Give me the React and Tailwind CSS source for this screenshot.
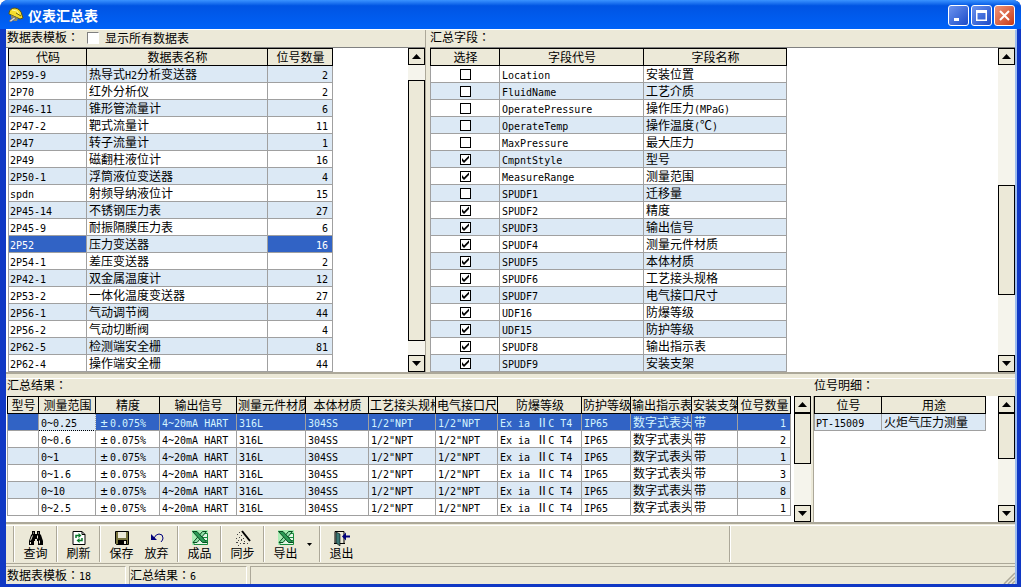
import React, { useState } from 'react';
import clsx from 'clsx';

const templates = [
  ['2P59-9', '热导式H2分析变送器', 2],
  ['2P70', '红外分析仪', 2],
  ['2P46-11', '锥形管流量计', 6],
  ['2P47-2', '靶式流量计', 11],
  ['2P47', '转子流量计', 1],
  ['2P49', '磁翻柱液位计', 16],
  ['2P50-1', '浮筒液位变送器', 4],
  ['spdn', '射频导纳液位计', 15],
  ['2P45-14', '不锈钢压力表', 27],
  ['2P45-9', '耐振隔膜压力表', 6],
  ['2P52', '压力变送器', 16],
  ['2P54-1', '差压变送器', 2],
  ['2P42-1', '双金属温度计', 12],
  ['2P53-2', '一体化温度变送器', 27],
  ['2P56-1', '气动调节阀', 44],
  ['2P56-2', '气动切断阀', 4],
  ['2P62-5', '检测端安全栅', 81],
  ['2P62-4', '操作端安全栅', 44],
];

const initialFields = [
  { code: 'Location', name: '安装位置', checked: false },
  { code: 'FluidName', name: '工艺介质', checked: false },
  { code: 'OperatePressure', name: '操作压力(MPaG)', checked: false },
  { code: 'OperateTemp', name: '操作温度(℃)', checked: false },
  { code: 'MaxPressure', name: '最大压力', checked: false },
  { code: 'CmpntStyle', name: '型号', checked: true },
  { code: 'MeasureRange', name: '测量范围', checked: true },
  { code: 'SPUDF1', name: '迁移量', checked: false },
  { code: 'SPUDF2', name: '精度', checked: true },
  { code: 'SPUDF3', name: '输出信号', checked: true },
  { code: 'SPUDF4', name: '测量元件材质', checked: true },
  { code: 'SPUDF5', name: '本体材质', checked: true },
  { code: 'SPUDF6', name: '工艺接头规格', checked: true },
  { code: 'SPUDF7', name: '电气接口尺寸', checked: true },
  { code: 'UDF16', name: '防爆等级', checked: true },
  { code: 'UDF15', name: '防护等级', checked: true },
  { code: 'SPUDF8', name: '输出指示表', checked: true },
  { code: 'SPUDF9', name: '安装支架', checked: true },
];

const resultColumns = [
  ['型号', 32],
  ['测量范围', 57],
  ['精度', 64],
  ['输出信号', 77],
  ['测量元件材质', 69],
  ['本体材质', 63],
  ['工艺接头规格', 67],
  ['电气接口尺寸', 62],
  ['防爆等级', 84],
  ['防护等级', 49],
  ['输出指示表', 61],
  ['安装支架', 46],
  ['位号数量', 53],
];

const results = [
  ['0~0.25', 1],
  ['0~0.6', 2],
  ['0~1', 1],
  ['0~1.6', 3],
  ['0~10', 8],
  ['0~2.5', 1],
].map(([range, count]) => [
  '', range, '±0.075%', '4~20mA HART', '316L', '304SS', '1/2"NPT', '1/2"NPT',
  'Ex ia ⅡC T4', 'IP65', '数字式表头', '带', count,
]);

function runClass(part) {
  // the TC face centres the colon in its cell
  if (part === '：') return "font-['Noto_Sans_CJK_TC',sans-serif] leading-none";
  if (part === '±') return "inline-block w-3 text-center font-['DejaVu_Sans_Mono',monospace] text-xs leading-none";
  return "font-['DejaVu_Sans_Mono','Liberation_Mono',monospace] text-[10px] leading-none";
}

// Latin runs get a half-width face so that two letters fill one Chinese cell
function Txt({ children }) {
  const parts = String(children).split(/([\x20-\x7e]+|±|：)/);
  return parts.map((part, i) =>
    i % 2 ? (
      <span key={i} className={runClass(part)}>
        {part}
      </span>
    ) : (
      part
    )
  );
}

function Grid({ columns, children }) {
  const total = columns.reduce((sum, c) => sum + c[1], 0);
  return (
    <table className="table-fixed border-separate border-spacing-0 shrink-0 self-start" style={{ width: total }}>
      <colgroup>
        {columns.map(([label, width]) => (
          <col key={label} style={{ width }} />
        ))}
      </colgroup>
      <thead>
        <tr>
          {columns.map(([label]) => (
            <th
              key={label}
              className="h-[18px] overflow-hidden whitespace-nowrap border-y border-r border-black bg-[#ece9d8] p-0 pl-px text-center font-normal leading-4 first:border-l"
            >
              {label}
            </th>
          ))}
        </tr>
      </thead>
      <tbody>{children}</tbody>
    </table>
  );
}

function Cell({ className, children }) {
  return (
    <td
      className={clsx(
        'h-[17px] overflow-hidden whitespace-nowrap border-b border-r border-[#a0a0a0] p-0 pl-0.5 leading-4 first:border-l first:pl-px',
        className
      )}
    >
      {children}
    </td>
  );
}

function Arrow({ up }) {
  return (
    <svg width="9" height="5" viewBox="0 0 9 5">
      <path d={up ? 'M0 5L4.5 0L9 5Z' : 'M0 0L4.5 5L9 0Z'} fill="#000" />
    </svg>
  );
}

function ScrollBar({ before, thumb, after }) {
  const button = 'flex h-[17px] shrink-0 items-center justify-center border border-black bg-[#ece9d8]';
  return (
    <div className="flex w-[17px] shrink-0 flex-col bg-[#f5f4ec]">
      <button type="button" aria-label="向上滚动" className={button}>
        <Arrow up />
      </button>
      <div style={{ flexGrow: before }} />
      <div className="border border-black bg-[#ece9d8]" style={{ flexGrow: thumb }} />
      <div style={{ flexGrow: after }} />
      <button type="button" aria-label="向下滚动" className={button}>
        <Arrow />
      </button>
    </div>
  );
}

function CheckBox({ checked, onChange, label }) {
  return (
    <span className="relative mx-auto block size-[11px]">
      <input
        type="checkbox"
        aria-label={label}
        checked={checked}
        onChange={onChange}
        className="block size-[11px] appearance-none border border-black bg-white"
      />
      {checked && (
        <svg className="pointer-events-none absolute inset-0" width="11" height="11" viewBox="0 0 11 11">
          <path d="M2 4v3l2 2 5-5V1.500L4 6.500Z" fill="#000" />
        </svg>
      )}
    </span>
  );
}

function HelmetIcon() {
  return (
    <svg width="16" height="16" viewBox="0 0 16 16">
      <path d="M1 6Q2 1 7 1Q13 2 14 8L15 11L12 12L1 7Z" fill="#f4dc2c" stroke="#5c5410" />
      <path d="M4 3l5 1 2 4" fill="none" stroke="#fff9a0" />
      <path d="M3 8l7 3-1 3H6L3 11Z" fill="#8d8a68" />
      <path d="M1 14l5-4 2 1-5 4Z" fill="#d8d8d8" stroke="#555" strokeWidth=".6" />
      <path d="M8 6l5 3" stroke="#6b6410" />
    </svg>
  );
}

function FindIcon() {
  return (
    <svg width="16" height="16" viewBox="0 0 16 16">
      <path
        d="M4 1h3v3h2V1h3v3l1 1 2 6v4h-5v-4H9V9H7v2H6v4H1v-4l2-6 1-1Z"
        fill="#000"
      />
      <path d="M4.500 5.500L2.500 10.500M9.500 5.500v3M5.500 2.500v1M10.500 2.500v1M11.500 10.500v3M2.500 12v2" stroke="#ece9d8" />
    </svg>
  );
}

function RefreshIcon() {
  return (
    <svg width="16" height="16" viewBox="0 0 16 16">
      <path d="M2 1.500h9l3 3v10H2Z" fill="#fff" stroke="#000" />
      <path d="M11 1.500v3h3" fill="none" stroke="#000" />
      <path d="M5 8V5.500h3M11 8v2.500H8" fill="none" stroke="#087a28" strokeWidth="1.500" />
      <path d="M7.500 3l3 2.500-3 2.500ZM8.500 8l-3 2.500 3 2.500Z" fill="#087a28" />
    </svg>
  );
}

function SaveIcon() {
  return (
    <svg width="16" height="16" viewBox="0 0 16 16">
      <path d="M1.500 1.500h13v13h-12l-1-1Z" fill="#77733c" stroke="#000" />
      <path d="M4 2h8v6H4Z" fill="#ece9d8" />
      <path d="M4 10h9v4H4Z" fill="#000" />
      <path d="M10 11h2v3h-2Z" fill="#ece9d8" />
    </svg>
  );
}

function UndoIcon() {
  return (
    <svg width="16" height="16" viewBox="0 0 16 16">
      <path d="M2 4v6h6Z" fill="#00007b" />
      <path d="M5 8q2-4 5-4q4 0 4 4q0 2-2 4" fill="none" stroke="#00007b" />
    </svg>
  );
}

function ExcelIcon() {
  return (
    <svg width="18" height="16" viewBox="0 0 18 16">
      <path d="M1 0h16v15H1Z" fill="#a9edb4" />
      <path d="M10 3.500h6.500v11H3V12" fill="#e2f7e5" stroke="#168a3c" />
      <path d="M12 7.500h4M12 10.500h4" stroke="#168a3c" />
      <path d="M15.500 1.500h-4L2 12.500h4Z" fill="#8fe0a6" stroke="#064d20" />
      <path d="M1.500 1.500h4.500l10 11h-4.500Z" fill="#2a9a55" stroke="#064d20" />
    </svg>
  );
}

function WandIcon() {
  return (
    <svg width="16" height="16" viewBox="0 0 16 16">
      <path d="M7 1l8 10" stroke="#000" strokeWidth="2" />
      <path
        d="M4 2h1v1H4zM2 4h1v1H2zM6 5h1v1H6zM4 7h1v1H4zM1 8h1v1H1zM8 8h1v1H8zM6 9h1v2H6zM3 10h1v1H3zM1 12h2v1H1zM9 11h1v1H9zM5 13h1v1H5zM8 13h2v1H8zM12 13h1v1h-1zM3 15h1v1H3z"
        fill="#444"
      />
    </svg>
  );
}

function ExitIcon() {
  return (
    <svg width="16" height="16" viewBox="0 0 16 16">
      <path d="M1 13.500V1.500h9v12M0 13.500h11" fill="none" stroke="#000" />
      <path d="M2 2l4 2v12l-4-3Z" fill="#3b7774" stroke="#000" strokeWidth=".6" />
      <path d="M8 6.500l4-4v3h4v2h-4v3Z" fill="#00007b" />
    </svg>
  );
}

function ToolButton({ label, icon }) {
  return (
    <button type="button" className="flex w-[35px] flex-col items-center pt-1 leading-4">
      {icon}
      <span className="leading-[14px]">{label}</span>
    </button>
  );
}

function Separator() {
  return <div className="mx-[3px] w-0.5 border-l border-r border-l-[#aca899] border-r-white" />;
}

function TitleButton({ label, close, children }) {
  return (
    <button
      type="button"
      aria-label={label}
      className={clsx(
        'flex size-[21px] items-center justify-center rounded-[3px] border border-white bg-linear-to-br',
        close ? 'from-[#ee9478] to-[#c5360f]' : 'from-[#6d93ee] to-[#1c49c8]'
      )}
    >
      <svg width="13" height="13" viewBox="0 0 13 13">
        {children}
      </svg>
    </button>
  );
}

function App() {
  const [showAll, setShowAll] = useState(false);
  const [selected, setSelected] = useState(10);
  const [fields, setFields] = useState(initialFields);

  const toggleField = (index) => {
    setFields(fields.map((f, i) => (i === index ? { ...f, checked: !f.checked } : f)));
  };

  return (
    <div className="flex min-h-screen flex-col overflow-hidden rounded-t-lg bg-[#1038c4] font-['Noto_Sans_CJK_SC',sans-serif] text-xs text-black">
      <header className="flex h-[29px] shrink-0 items-center bg-linear-to-b from-[#3a93ff] via-[#0054e3] via-20% to-[#0062f8] pl-2 pr-[6px]">
        <HelmetIcon />
        <h1 className="ml-1 flex-1 text-sm font-bold text-white">仪表汇总表</h1>
        <div className="flex gap-0.5 pt-0.5">
          <TitleButton label="最小化">
            <path d="M2 9h5v3H2Z" fill="#fff" />
          </TitleButton>
          <TitleButton label="最大化">
            <path d="M1 1h11v11H1ZM2.500 4v6.500h8V4Z" fill="#fff" fillRule="evenodd" />
          </TitleButton>
          <TitleButton label="关闭" close>
            <path d="M2 2l9 9M11 2l-9 9" stroke="#fff" strokeWidth="2" />
          </TitleButton>
        </div>
      </header>

      <main className="ml-[6px] mr-1 mb-[3px] flex flex-1 flex-col border-r-2 border-t border-r-[#9cbcf0] border-t-white bg-[#ece9d8]">
        <div className="grid grid-cols-[419fr_5px_585fr]">
          <section>
            <div className="flex h-[17px] items-start pl-px">
              <h2 className="leading-[14px]">
                <Txt>数据表模板：</Txt>
              </h2>
              <label className="ml-2 flex items-center gap-[6px] leading-4">
                <input
                  type="checkbox"
                  checked={showAll}
                  onChange={() => setShowAll(!showAll)}
                  className="size-3 appearance-none border border-[#808080] border-b-white border-r-white bg-white checked:bg-[#3163c5]"
                />
                显示所有数据表
              </label>
            </div>
            <div className="flex justify-between border-t border-[#808080] bg-white pl-0.5">
              <Grid columns={[['代码', 79], ['数据表名称', 181], ['位号数量', 65]]}>
                {templates.map(([code, name, count], i) => {
                  const active = i === selected;
                  return (
                    <tr
                      key={code}
                      onClick={() => setSelected(i)}
                      className={i % 2 === 0 ? 'bg-[#dce9f5]' : 'bg-white'}
                    >
                      <Cell className={clsx(active && 'bg-[#3163c5] text-white')}>
                        <Txt>{code}</Txt>
                      </Cell>
                      <Cell>
                        <Txt>{name}</Txt>
                      </Cell>
                      <Cell className={clsx('pr-1 text-right', active && 'bg-[#3163c5] text-white')}>
                        <Txt>{count}</Txt>
                      </Cell>
                    </tr>
                  );
                })}
              </Grid>
              <ScrollBar before={15} thumb={261} after={14} />
            </div>
          </section>

          <div className="border-l border-[#aca899]" />

          <section>
            <h2 className="h-[17px] leading-[14px]">
              <Txt>汇总字段：</Txt>
            </h2>
            <div className="flex justify-between border-t border-[#808080] bg-white">
              <Grid columns={[['选择', 70], ['字段代号', 144], ['字段名称', 143]]}>
                {fields.map((field, i) => (
                  <tr key={field.code} className={i % 2 ? 'bg-[#dce9f5]' : 'bg-white'}>
                    <Cell>
                      <CheckBox
                        label={field.name}
                        checked={field.checked}
                        onChange={() => toggleField(i)}
                      />
                    </Cell>
                    <Cell>
                      <Txt>{field.code}</Txt>
                    </Cell>
                    <Cell>
                      <Txt>{field.name}</Txt>
                    </Cell>
                  </tr>
                ))}
              </Grid>
              <ScrollBar before={121} thumb={109} after={60} />
            </div>
          </section>
        </div>

        <div className="h-[6px] border-t-2 border-[#aca899]" />

        <div className="grid grid-cols-[805fr_3px_201fr] border-t border-white">
          <section>
            <h2 className="h-[17px] pl-px leading-3">
              <Txt>汇总结果：</Txt>
            </h2>
            <div className="flex h-[126px] justify-between bg-white pl-px">
              <Grid columns={resultColumns}>
                {results.map((row, r) => (
                  <tr
                    key={row[1]}
                    className={clsx(r === 0 ? 'bg-[#3163c5] text-[#d4f4ff]' : r % 2 === 0 ? 'bg-[#dce9f5]' : 'bg-white')}
                  >
                    {row.map((value, c) => (
                      <Cell
                        key={c}
                        className={clsx(
                          c === row.length - 1 && 'pr-1 text-right',
                          r === 0 && c === 1 && 'border-dotted border-b-black bg-[#dce9f5] text-black'
                        )}
                      >
                        <Txt>{value}</Txt>
                      </Cell>
                    ))}
                  </tr>
                ))}
              </Grid>
              <ScrollBar before={0} thumb={50} after={42} />
            </div>
          </section>

          <div className="mt-[17px] border-r border-[#aca899]" />

          <section>
            <h2 className="h-[17px] leading-3">
              <Txt>位号明细：</Txt>
            </h2>
            <div className="flex h-[126px] justify-between bg-white">
              <Grid columns={[['位号', 68], ['用途', 104]]}>
                <tr className="bg-[#dce9f5]">
                  <Cell>
                    <Txt>PT-15009</Txt>
                  </Cell>
                  <Cell>火炬气压力测量</Cell>
                </tr>
              </Grid>
              <ScrollBar before={0} thumb={45} after={47} />
            </div>
          </section>
        </div>

        <div className="h-1 border-b border-t-2 border-b-white border-t-[#aca899]" />

        <div className="flex h-[38px] border-b border-[#aca899] pb-px pl-1">
          <Separator />
          <ToolButton label="查询" icon={<FindIcon />} />
          <Separator />
          <ToolButton label="刷新" icon={<RefreshIcon />} />
          <Separator />
          <ToolButton label="保存" icon={<SaveIcon />} />
          <ToolButton label="放弃" icon={<UndoIcon />} />
          <Separator />
          <ToolButton label="成品" icon={<ExcelIcon />} />
          <Separator />
          <ToolButton label="同步" icon={<WandIcon />} />
          <Separator />
          <ToolButton label="导出" icon={<ExcelIcon />} />
          <button type="button" aria-label="导出选项" className="flex w-[13px] items-center justify-center">
            <svg width="5" height="3" viewBox="0 0 5 3">
              <path d="M0 0h5L2.500 3Z" fill="#000" />
            </svg>
          </button>
          <Separator />
          <ToolButton label="退出" icon={<ExitIcon />} />
          <div className="w-[36.5%]" />
          <Separator />
        </div>

        <footer className="mt-0.5 flex flex-1 gap-[3px] leading-4">
          <div className="w-[120px] border-r border-t border-r-white border-t-[#aca899] pl-px">
            <Txt>数据表模板：18</Txt>
          </div>
          <div className="w-[118px] border-x border-t border-r-white border-l-[#aca899] border-t-[#aca899]">
            <Txt>汇总结果：6</Txt>
          </div>
          <div className="flex flex-1 items-end justify-end border-l border-t border-[#aca899]">
            <svg width="12" height="12" viewBox="0 0 12 12">
              <path d="M1 12L12 1M5 12l7-7M9 12l3-3" stroke="#aca899" strokeWidth="1.500" />
            </svg>
          </div>
        </footer>
      </main>
    </div>
  );
}

export default App;
